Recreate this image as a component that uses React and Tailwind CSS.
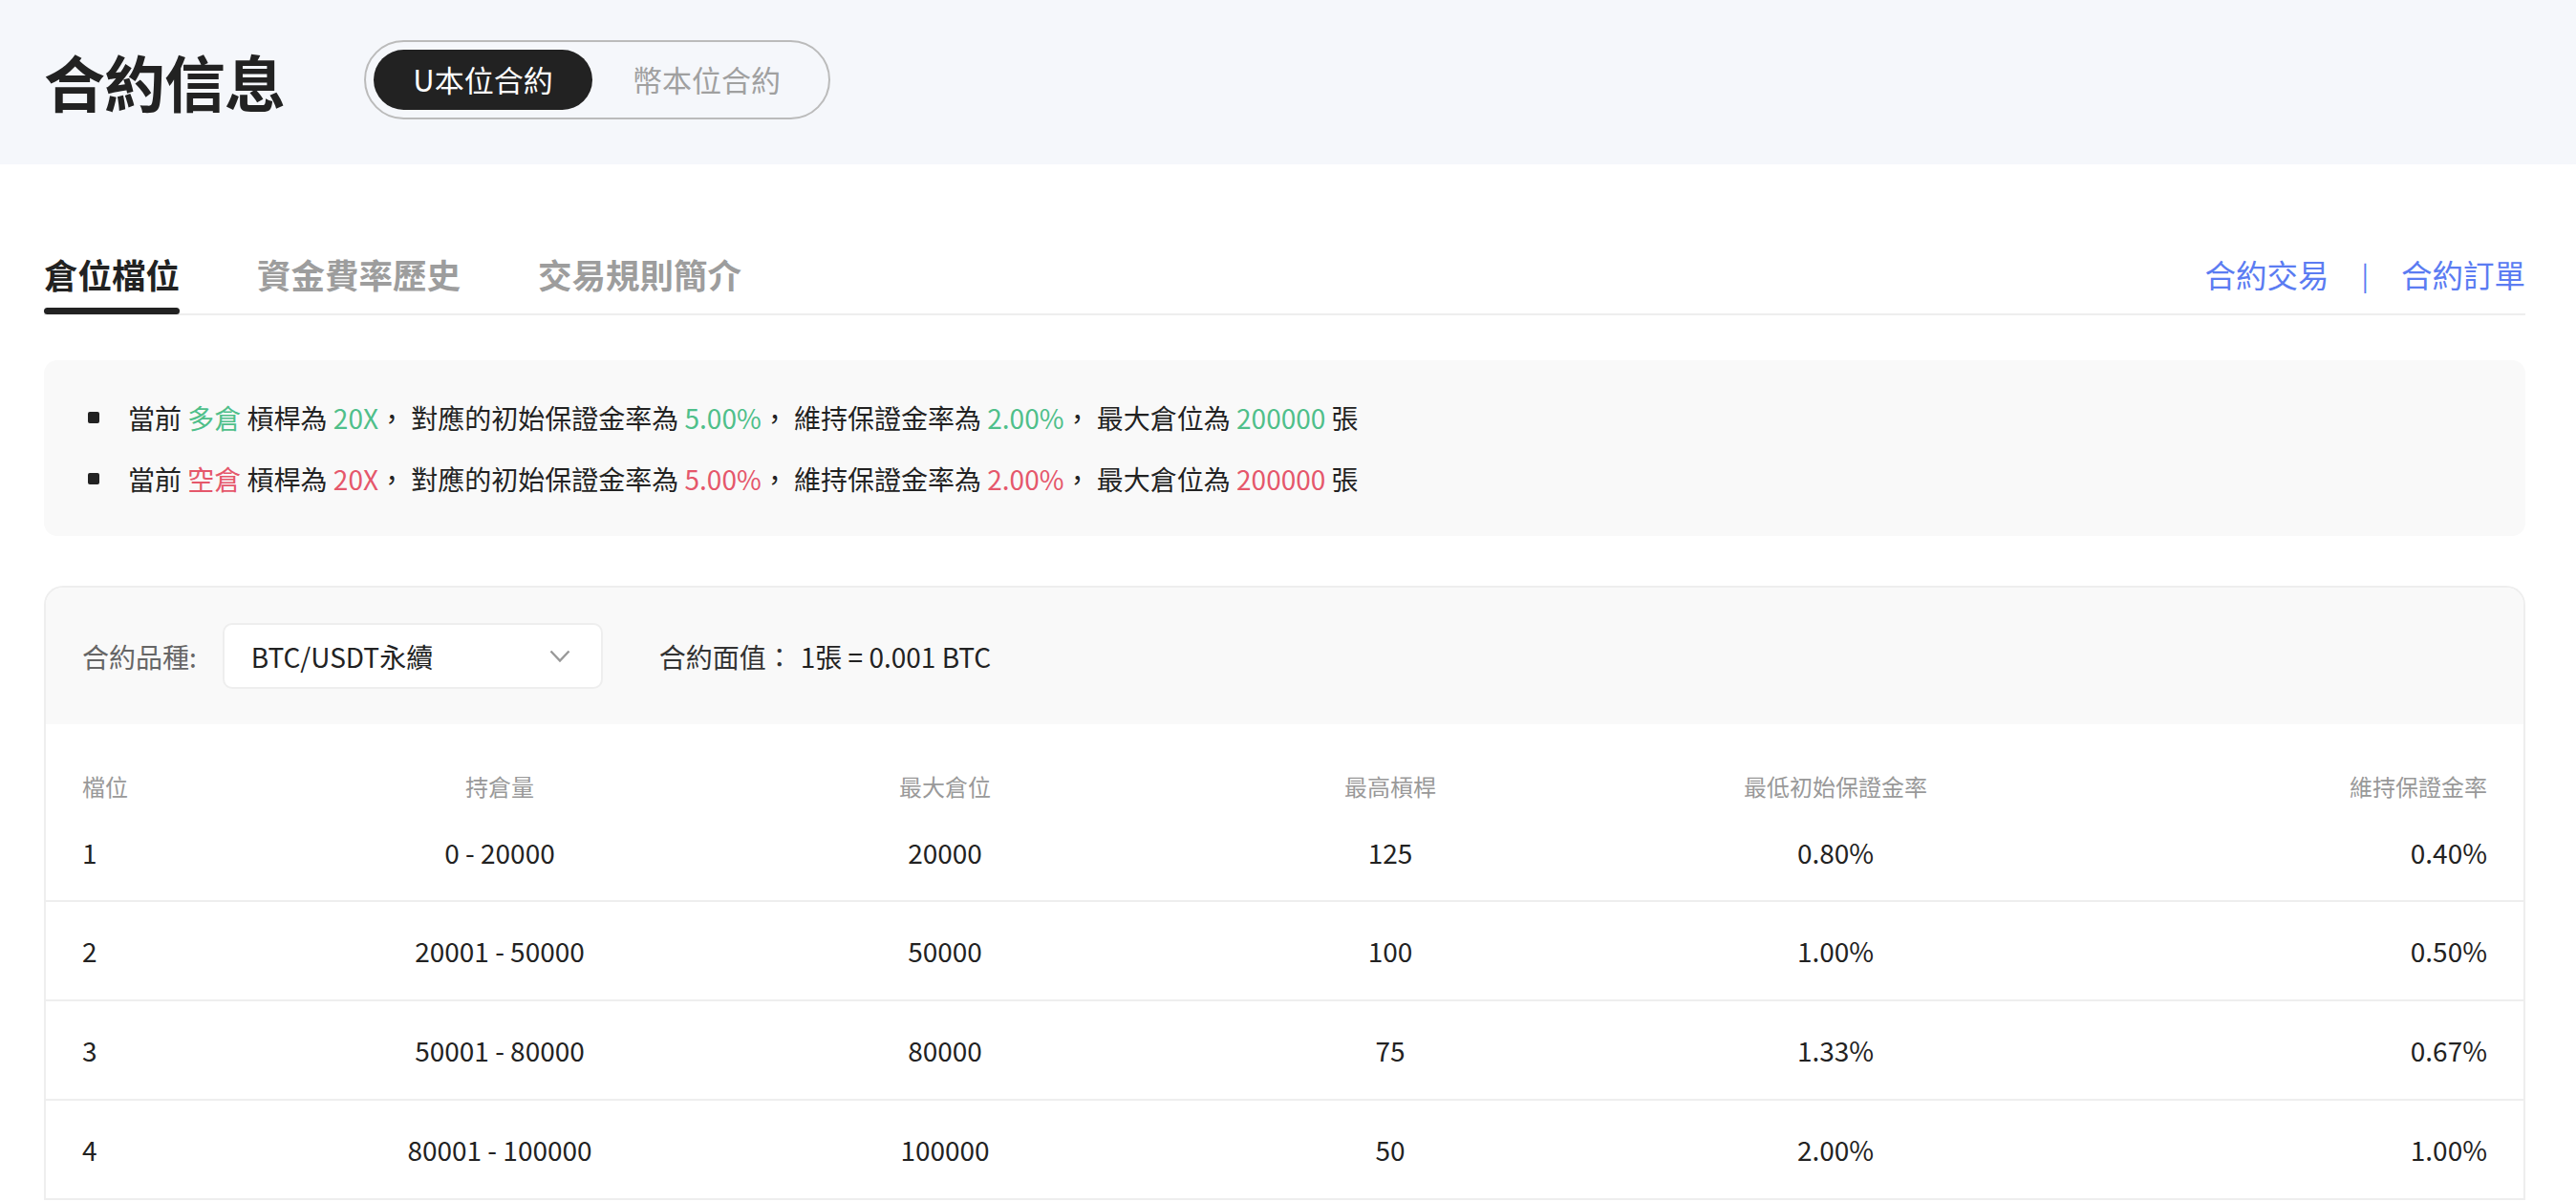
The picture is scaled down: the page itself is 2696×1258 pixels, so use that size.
import { useState } from "react";

const tiers = [
    { level: "1", range: "0 - 20000", max: "20000", lev: "125", init: "0.80%", maint: "0.40%" },
    { level: "2", range: "20001 - 50000", max: "50000", lev: "100", init: "1.00%", maint: "0.50%" },
    { level: "3", range: "50001 - 80000", max: "80000", lev: "75", init: "1.33%", maint: "0.67%" },
    { level: "4", range: "80001 - 100000", max: "100000", lev: "50", init: "2.00%", maint: "1.00%" },
];

const cols = "grid grid-cols-[204px_466px_466px_466px_466px_1fr] items-center";

export default function App() {
    const [mode, setMode] = useState("u");
    const [tab, setTab] = useState(0);

    return (
        <div className="min-h-screen bg-white pb-[2px] font-['Noto_Sans_CJK_TC','Noto_Sans',sans-serif] text-[#222]">
            <header className="h-[172px] bg-[#f5f7fb] pl-[46px] pb-[5px] flex items-center">
                <h1 className="text-[64px] leading-none font-semibold tracking-[-1px]">合約信息</h1>
                <div className="ml-[83px] w-[488px] h-[83px] rounded-full border-2 border-[#bbbbbb] p-[8px] flex">
                    <button
                        onClick={() => setMode("u")}
                        className={`w-[229px] h-full rounded-full text-[31px] ${
                            mode === "u" ? "bg-[#222] text-white" : "text-[#a0a0a0]"
                        }`}
                    >
                        U本位合約
                    </button>
                    <button
                        onClick={() => setMode("coin")}
                        className={`flex-1 h-full rounded-full text-[31px] ${
                            mode === "coin" ? "bg-[#222] text-white" : "text-[#a0a0a0]"
                        }`}
                    >
                        幣本位合約
                    </button>
                </div>
            </header>

            <main className="pl-[46px] pr-[53px]">
                <div className="mt-[91px] flex items-start justify-between border-b-2 border-[#eeeeee]">
                    <div className="flex gap-[81px] -mb-[1px]">
                        {["倉位檔位", "資金費率歷史", "交易規則簡介"].map((t, i) => (
                            <button key={t} onClick={() => setTab(i)} className="flex flex-col">
                                <span
                                    className={`text-[35.5px] leading-[48px] font-bold ${
                                        tab === i ? "text-[#222]" : "text-[#9d9d9d]"
                                    }`}
                                >
                                    {t}
                                </span>
                                <span
                                    className={`mt-[11px] h-[7px] rounded-full ${tab === i ? "bg-[#222]" : "bg-transparent"}`}
                                />
                            </button>
                        ))}
                    </div>
                    <div className="flex items-center text-[32.5px] leading-[48px] text-[#5b7cf2]">
                        <a>合約交易</a>
                        <span className="mx-[34px] text-[28px]">|</span>
                        <a>合約訂單</a>
                    </div>
                </div>

                <div className="mt-[47px] rounded-[14px] bg-[#f9f9f9] pl-[46px] py-[42px] flex flex-col gap-[28px] text-[28px] leading-[36px]">
                    <Notice side="多倉" color="text-[#4fbf8a]" />
                    <Notice side="空倉" color="text-[#e5576b]" />
                </div>

                <section className="mt-[52px] rounded-t-[20px] border-x-2 border-t-2 border-[#eeeeee] overflow-hidden">
                    <div className="h-[143px] bg-[#f9f9f9] pl-[38px] flex items-center text-[28px]">
                        <span className="text-[#666]">合約品種:</span>
                        <div className="ml-[27px] w-[398px] h-[69px] rounded-[10px] border-2 border-[#eeeeee] bg-white pl-[28px] pr-[32px] flex items-center justify-between">
                            <span className="text-[#222]">BTC/USDT永續</span>
                            <svg width="22" height="14" viewBox="0 0 22 14" fill="none">
                                <polyline points="1.5,1.5 11,11.5 20.5,1.5" stroke="#999" strokeWidth="2.4" />
                            </svg>
                        </div>
                        <span className="ml-[59px] text-[#333]">合約面值：</span>
                        <span className="ml-[8px] text-[#222]">1張 = 0.001 BTC</span>
                    </div>

                    <div className="px-[38px]">
                        <div className={`${cols} h-[84px] pt-[46px] text-[24px] leading-[36px] text-[#999]`}>
                            <span>檔位</span>
                            <span className="text-center">持倉量</span>
                            <span className="text-center">最大倉位</span>
                            <span className="text-center">最高槓桿</span>
                            <span className="text-center">最低初始保證金率</span>
                            <span className="text-right">維持保證金率</span>
                        </div>
                    </div>

                    {tiers.map((r, i) => (
                        <div key={r.level} className="border-b-2 border-[#eeeeee] px-[38px]">
                            <div className={`${cols} ${i === 0 ? "h-[100px]" : "h-[102px]"} text-[28px] text-[#222]`}>
                                <span>{r.level}</span>
                                <span className="text-center">{r.range}</span>
                                <span className="text-center">{r.max}</span>
                                <span className="text-center">{r.lev}</span>
                                <span className="text-center">{r.init}</span>
                                <span className="text-right">{r.maint}</span>
                            </div>
                        </div>
                    ))}
                </section>
            </main>
        </div>
    );
}

function Notice({ side, color }) {
    return (
        <div className="flex items-center">
            <span className="w-[12px] h-[12px] rounded-[2px] bg-[#222]" />
            <p className="ml-[30px] text-[#222] whitespace-pre">
                當前 <span className={color}>{side}</span> 槓桿為 <span className={color}>20X</span>， 對應的初始保證金率為{" "}
                <span className={color}>5.00%</span>， 維持保證金率為 <span className={color}>2.00%</span>， 最大倉位為{" "}
                <span className={color}>200000</span> 張
            </p>
        </div>
    );
}
